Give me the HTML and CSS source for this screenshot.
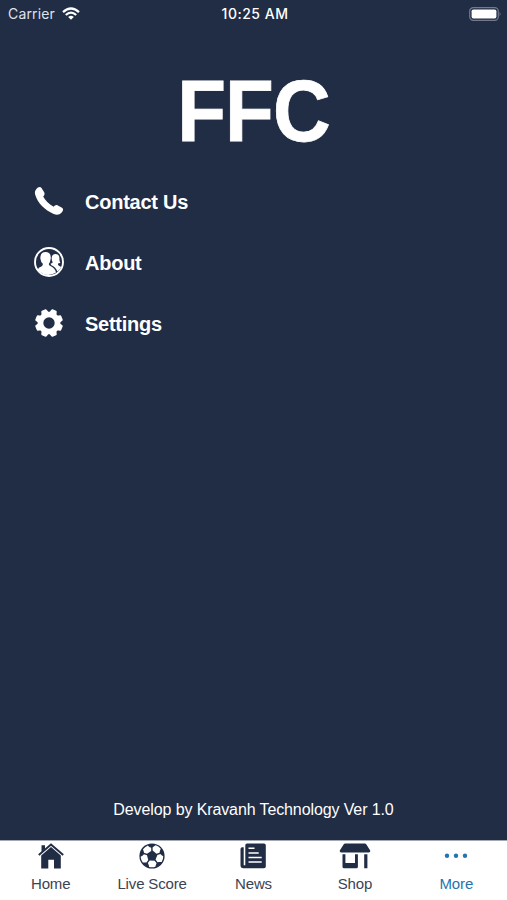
FILE: index.html
```html
<!DOCTYPE html>
<html lang="en">
<head>
<meta charset="utf-8">
<title>FFC</title>
<link rel="stylesheet" href="styles.css">
</head>
<body>
<div class="app">
  <header class="status">
    <div class="carrier"><span>Carrier</span>
      <svg width="18" height="14" viewBox="0 0 18 14" fill="none" stroke="#fff" stroke-width="2.3"><path d="M1 5.1Q9-2 17 5.1M3.8 8Q9 3.3 14.2 8"/><path d="M9 12.8L6.2 10Q9 7.7 11.8 10Z" fill="#fff" stroke="none"/></svg>
    </div>
    <time class="clock">10:25 AM</time>
    <svg class="battery" width="33" height="14" viewBox="0 0 33 14"><rect x=".7" y=".7" width="28.6" height="12.6" rx="3.6" fill="none" stroke="#737a8c" stroke-width="1.2"/><rect x="2.6" y="2.6" width="24.8" height="8.8" rx="1.7" fill="#fff"/><path d="M30.7 4.7q1.8 2.3 0 4.6z" fill="#858b9b"/></svg>
  </header>
  <h1 class="brand">FFC</h1>
  <ul class="menu">
    <li><svg width="30" height="30" viewBox="0 0 30 30" fill="#fff"><path d="M2.2 3.2C4 .8 6.4.3 7.5 2L10.2 6.2C11.1 8 10.2 9.3 9.2 10.6C11 14.5 14.8 18.2 19.6 20.7C20.8 19.5 22 18.6 23.8 19.4L28 21.8C29.8 23 29.3 24.9 27.5 26.8C25.5 29 22.6 29.3 19.7 28C10.6 24 3.7 17 1.2 8.8C.6 6.6.9 4.8 2.2 3.2Z"/></svg><span>Contact Us</span></li>
    <li><svg width="30" height="30" viewBox="0 0 30 30"><circle cx="15" cy="15" r="14" fill="none" stroke="#fff" stroke-width="1.9"/><path fill="#fff" d="M3.7 22.7Q4.2 20.4 7.4 19.5Q9.1 18.8 8.8 16.8Q6.7 14.7 6.4 11.7C6 7.6 8 5 11.5 5C15.5 5 17.2 7.8 16.7 11.8Q16.4 14.8 14.9 16.8Q14.6 18.3 16.4 19C19.6 20.5 21.5 22.5 22 25.6Q12 31.5 3.7 22.7Z"/><path fill="#fff" d="M16.6 16.6Q18.3 16.3 18.7 15.2Q17.5 13 17.7 10.8C18 8.2 19.4 6.8 21.6 6.9C24.4 6.9 25.7 9 25.4 12Q25.3 14.3 26.4 15.7Q25.2 16.5 24 16.5Q23.7 17.9 24.9 18.7L27.2 20.1Q25.7 22.9 23.3 24.6Q22.1 20.4 17 18Z"/></svg><span>About</span></li>
    <li><svg width="30" height="30" viewBox="-15 -15 30 30"><g fill="#fff"><circle r="11.3"/><path id="t" d="M-3.8 -10L-2.9 -13.2Q-2.7 -14 -1.9 -14H1.9Q2.7 -14 2.9 -13.2L3.8 -10V10L2.9 13.2Q2.7 14 1.9 14H-1.9Q-2.7 14 -2.9 13.2L-3.8 10Z" transform="rotate(22.5)"/><use href="#t" transform="rotate(45)"/><use href="#t" transform="rotate(90)"/><use href="#t" transform="rotate(135)"/></g><circle r="5.7" fill="#212c45"/></svg><span>Settings</span></li>
  </ul>
  <p class="credit"><span>Develop by Kravanh Technology Ver 1.0</span></p>
  <nav class="tabs">
    <a class="tab"><svg width="26" height="26" viewBox="0 0 26 26" fill="#212c45"><path d="M3.5 2.2H7V6L3.5 9Z"/><path d="M.8 12L13 1.6L25.2 12" fill="none" stroke="#212c45" stroke-width="2"/><path d="M3.2 12.4L13 4.1L22.8 12.4V25.5H16V16.8H10.3V25.5H3.2Z"/></svg><span>Home</span></a>
    <a class="tab"><svg width="26" height="26" viewBox="-13 -13 26 26"><circle r="12.6" fill="#212c45"/><g fill="#fff"><path id="panel" d="M-.8 -5V-8.2Q-2.8 -9 -4.2 -10.6Q-7.2 -9.3 -9 -6.7Q-8.3 -4.9 -8 -3.2L-5 -2.3Z"/><use href="#panel" transform="rotate(72)"/><use href="#panel" transform="rotate(144)"/><use href="#panel" transform="rotate(216)"/><use href="#panel" transform="rotate(288)"/></g></svg><span>Live Score</span></a>
    <a class="tab"><svg width="26" height="26" viewBox="0 0 26 26"><path d="M7 .5H24Q25.8.5 25.8 2.3V23.5Q25.8 25.3 24 25.3H3.4Q.5 25.3.5 22V6Q.5 4.3 2.2 4.3H3.7V22.2H5.3V2.3Q5.3.5 7 .5Z" fill="#212c45"/><path d="M8.5 5.3H14.5M8.5 9.9H18.7M8.5 14.4H21.7M8.5 19.1H21.7" fill="none" stroke="#fff" stroke-width="1.5"/></svg><span>News</span></a>
    <a class="tab"><svg width="32" height="26" viewBox="0 0 32 26" fill="#212c45"><path d="M6.2.5H25.8Q26.8.5 27.4 1.5L31.2 7.6Q31.7 9.6 29.6 9.6H2.4Q.3 9.6.8 7.6L4.6 1.5Q5.2.5 6.2.5Z"/><path d="M3.5 11.2H6.4V20H16V11.2H18.9V23.7Q18.9 25.3 17.3 25.3H5.1Q3.5 25.3 3.5 23.7ZM25.2 11.2H28.4V25.3H25.2Z"/></svg><span>Shop</span></a>
    <a class="tab active"><svg width="26" height="26" viewBox="0 0 26 26" fill="#2474ad"><circle cx="4" cy="12.7" r="2.2"/><circle cx="13" cy="12.7" r="2.2"/><circle cx="22" cy="12.7" r="2.2"/></svg><span>More</span></a>
  </nav>
</div>
</body>
</html>
```

FILE: styles.css
```css
* { box-sizing: border-box; }
body { margin: 0; background: #212c45; color: #fff; font-family: "Liberation Sans", Arial, sans-serif; }
svg { display: block; flex: none; }
.app { height: 900px; display: flex; flex-direction: column; }
.status { height: 27px; padding: 0 5px 0 8px; display: grid; grid-template-columns: 1fr auto 1fr; align-items: center; font: 14px/27px Inter, sans-serif; }
.carrier { display: flex; align-items: center; gap: 7px; color: #dfe3ec; letter-spacing: .15px; }
.clock { font-weight: 500; font-size: 14px; letter-spacing: .5px; }
.battery { justify-self: end; }
.brand { margin: 39px 0 0; height: 90px; text-align: center; font-size: 87px; line-height: 90px; letter-spacing: -1px; -webkit-text-stroke: .8px #fff; transform: scaleX(.918); }
.menu { list-style: none; margin: 14.5px 0 0; padding: 0 34px; }
.menu li { height: 61px; display: flex; align-items: center; gap: 21px; font-size: 20px; font-weight: 700; letter-spacing: -.25px; }
.menu span { padding-top: 2px; }
.credit { margin: auto 0 0; height: 61px; text-align: center; font-size: 16px; line-height: 62px; letter-spacing: -.11px; }
.tabs { height: 60px; background: #fff; border-top: 1px solid #a5a9b3; display: grid; grid-template-columns: repeat(5, 1fr); color: #3b4353; }
.tab { display: flex; flex-direction: column; align-items: center; padding-top: 2px; font-size: 15px; line-height: 18px; gap: 6px; letter-spacing: -.15px; }
.active { color: #2474ad; }
```
